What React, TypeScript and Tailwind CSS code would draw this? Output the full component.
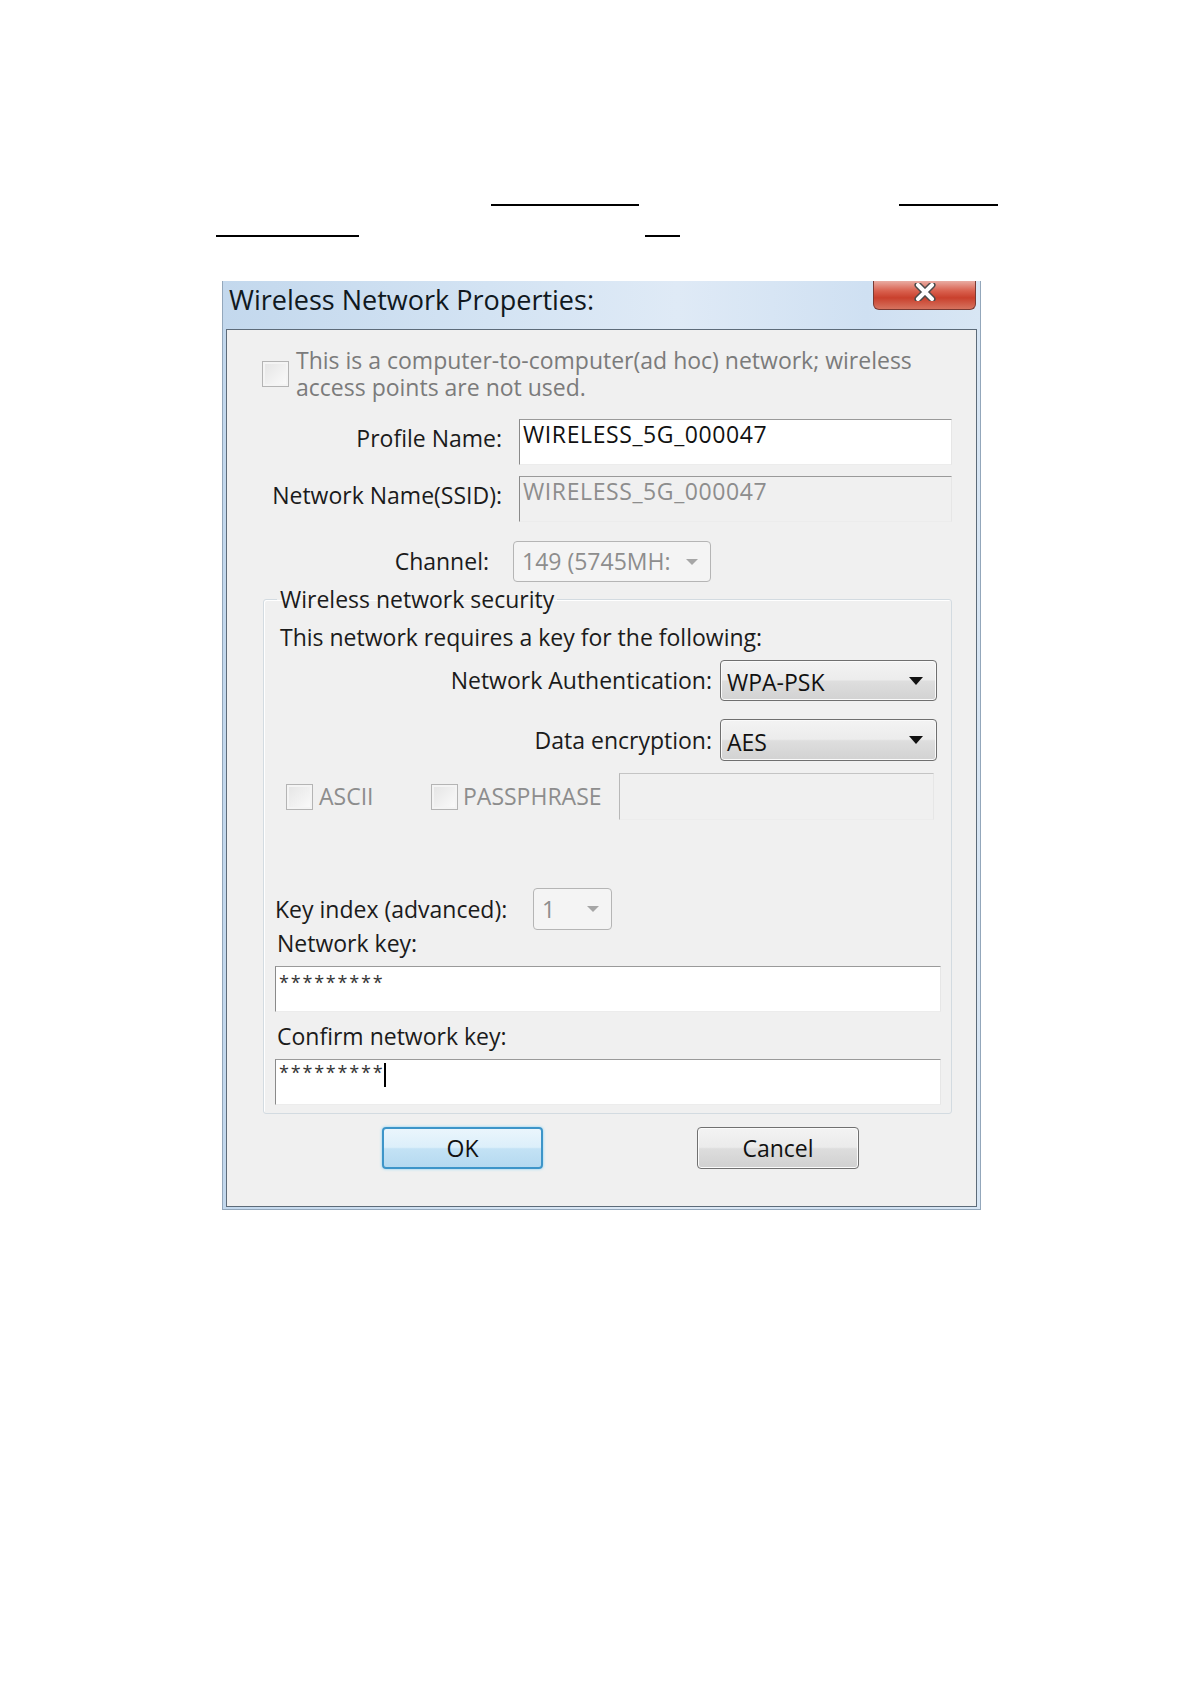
import React from "react";

const CloseGlyph: React.FC = () => (
  <svg width="24" height="18" viewBox="0 0 24 18" aria-hidden="true">
    <path d="M5 2 L19 16 M19 2 L5 16" stroke="#4b4b4b" strokeWidth="7" strokeLinecap="round" />
    <path d="M5 2 L19 16 M19 2 L5 16" stroke="#ffffff" strokeWidth="4" strokeLinecap="round" />
  </svg>
);

const Checkbox: React.FC<{ className?: string }> = ({ className = "" }) => (
  <div
    className={`h-[26px] w-[27px] shrink-0 border border-[#b4b4b4] bg-[linear-gradient(135deg,#e4e4e4,#fbfbfb)] shadow-[inset_0_0_0_2px_#f4f4f4] ${className}`}
  />
);

const TextBox: React.FC<{ className?: string; children?: React.ReactNode }> = ({ className = "", children }) => (
  <div
    className={`border-t border-l border-r border-b border-t-[#9a9a9a] border-l-[#8a8a8a] border-r-[#e6e6e6] border-b-[#ececec] ${className}`}
  >
    {children}
  </div>
);

const Arrow: React.FC<{ color: string; w?: number; h?: number }> = ({ color, w = 14, h = 8 }) => (
  <svg width={w} height={h} viewBox={`0 0 ${w} ${h}`} aria-hidden="true">
    <path d={`M0 0 L${w} 0 L${w / 2} ${h} Z`} fill={color} />
  </svg>
);

const DropDown: React.FC<{ value: string; className?: string }> = ({ value, className = "" }) => (
  <div
    className={`flex items-center justify-between rounded-[4px] border border-[#6f6f6f] bg-[linear-gradient(180deg,#f3f3f3_0%,#ececec_48%,#dedede_52%,#d2d2d2_100%)] pl-[6px] pr-[13px] shadow-[inset_0_0_0_1px_#fafafa] ${className}`}
  >
    <span className="pt-[4px] text-[#111]">{value}</span>
    <Arrow color="#111" w={14} h={8} />
  </div>
);

const DisabledDropDown: React.FC<{ value: string; className?: string }> = ({ value, className = "" }) => (
  <div
    className={`flex items-center justify-between rounded-[4px] border border-[#b5b5b5] bg-[#f4f4f4] pl-[8px] pr-[12px] ${className}`}
  >
    <span className="text-[#8d8d8d]">{value}</span>
    <Arrow color="#a6a6a6" w={12} h={6} />
  </div>
);

function WirelessDialog() {
  return (
    <div className="ml-[222px] mt-[44px] flex h-[929px] w-[759px] flex-col border border-t-0 border-[#93a7bb] bg-[linear-gradient(90deg,#c3d8ed_0%,#d3e3f3_35%,#dfeaf6_60%,#cfe0f2_85%,#d8e6f4_100%)]">
      {/* title bar */}
      <div className="flex h-[48px] items-start justify-between">
        <div className="pl-[6px] pt-[2px] text-[27px] leading-[34px] text-[#101820]">Wireless Network Properties:</div>
        <div className="mr-[4px] flex h-[29px] w-[103px] items-start justify-center rounded-b-[6px] border border-t-0 border-[#7a3a33] bg-[linear-gradient(180deg,#e9aca2_0%,#d9614f_35%,#c9402d_60%,#d6735f_100%)] pt-[2px]">
          <CloseGlyph />
        </div>
      </div>

      {/* client area */}
      <div className="mx-[3px] mb-[2px] flex flex-1 flex-col border border-[#5d6b79] bg-[#f0f0f0]">
        <div className="flex items-start pl-[35px]">
          <Checkbox className="mt-[31px]" />
          <div className="ml-[7px] pt-[17px] text-[#7b7b7b]">
            This is a computer-to-computer(ad hoc) network; wireless
            <br />
            access points are not used.
          </div>
        </div>

        <div className="mt-[18px] flex items-start">
          <div className="w-[275px] pt-[6px] text-right">Profile Name:</div>
          <TextBox className="ml-[17px] h-[46px] w-[433px] bg-white pl-[3px] pt-[1px] tracking-[0.6px] text-[#111]">WIRELESS_5G_000047</TextBox>
        </div>

        <div className="mt-[11px] flex items-start">
          <div className="w-[275px] pt-[6px] text-right">Network Name(SSID):</div>
          <TextBox className="ml-[17px] h-[46px] w-[433px] bg-[#f0f0f0] pl-[3px] pt-[1px] tracking-[0.6px] text-[#8d8d8d]">WIRELESS_5G_000047</TextBox>
        </div>

        <div className="mt-[19px] flex items-center">
          <div className="w-[262px] text-right">Channel:</div>
          <DisabledDropDown value="149 (5745MH:" className="ml-[24px] h-[41px] w-[198px]" />
        </div>

        <fieldset className="ml-[36px] mt-[4px] w-[689px] rounded-[3px] border border-[#d3dbe1] pb-[8px] shadow-[inset_1px_1px_0_#ffffff]">
          <legend className="ml-[13px] px-[3px]">Wireless network security</legend>

          <div className="mt-[11px] pl-[16px]">This network requires a key for the following:</div>

          <div className="mt-[9px] flex items-center justify-end gap-[8px] pr-[14px]">
            <span>Network Authentication:</span>
            <DropDown value="WPA-PSK" className="h-[41px] w-[217px]" />
          </div>

          <div className="mt-[18px] flex items-center justify-end gap-[8px] pr-[14px]">
            <span>Data encryption:</span>
            <DropDown value="AES" className="h-[42px] w-[217px]" />
          </div>

          <div className="mt-[12px] flex items-center pl-[22px] text-[#8d8d8d]">
            <Checkbox />
            <span className="ml-[6px] w-[112px]">ASCII</span>
            <Checkbox />
            <span className="ml-[5px] w-[156px]">PASSPHRASE</span>
            <TextBox className="h-[47px] w-[315px] border-t-[#c4c4c4] border-l-[#b8b8b8] bg-[#f0f0f0]" />
          </div>

          <div className="mt-[68px] flex items-center pl-[11px]">
            <span className="w-[258px]">Key index (advanced):</span>
            <DisabledDropDown value="1" className="h-[42px] w-[79px]" />
          </div>

          <div className="pl-[13px]">Network key:</div>
          <TextBox className="ml-[11px] mt-[9px] h-[46px] w-[666px] bg-white pl-[3px]">
            <span className="text-[18px] leading-[24px] tracking-[1.8px] text-[#333]">*********</span>
          </TextBox>

          <div className="mt-[11px] pl-[13px]">Confirm network key:</div>
          <TextBox className="ml-[11px] mt-[9px] flex h-[46px] w-[666px] items-start bg-white pl-[3px]">
            <span className="text-[18px] leading-[24px] tracking-[1.8px] text-[#333]">*********</span>
            <span className="mt-[3px] h-[24px] w-[2px] bg-black" />
          </TextBox>
        </fieldset>

        <div className="ml-[155px] mt-[13px] flex gap-[154px]">
          <div className="flex h-[42px] w-[161px] items-center justify-center rounded-[4px] border-2 border-[#3d95c9] bg-[linear-gradient(180deg,#eaf5fc_0%,#dceffa_48%,#c3e2f5_52%,#b5d9f0_100%)] shadow-[0_0_3px_#7fd0f5] text-[#111]">
            OK
          </div>
          <div className="flex h-[42px] w-[162px] items-center justify-center rounded-[4px] border border-[#707070] bg-[linear-gradient(180deg,#f3f3f3_0%,#ebebeb_48%,#dddddd_52%,#d0d0d0_100%)] shadow-[inset_0_0_0_1px_#fbfbfb] text-[#111]">
            Cancel
          </div>
        </div>
      </div>
    </div>
  );
}

export default function App() {
  return (
    <div className="min-h-[1684px] w-[1190px] bg-white font-['Open_Sans',sans-serif] text-[23px] leading-[27px] text-[#1b1b1b]">
      <div className="flex pt-[204px]">
        <div className="ml-[491px] h-[2px] w-[148px] bg-black" />
        <div className="ml-[260px] h-[2px] w-[99px] bg-black" />
      </div>
      <div className="mt-[29px] flex">
        <div className="ml-[216px] h-[2px] w-[143px] bg-black" />
        <div className="ml-[286px] h-[2px] w-[35px] bg-black" />
      </div>
      <WirelessDialog />
    </div>
  );
}
